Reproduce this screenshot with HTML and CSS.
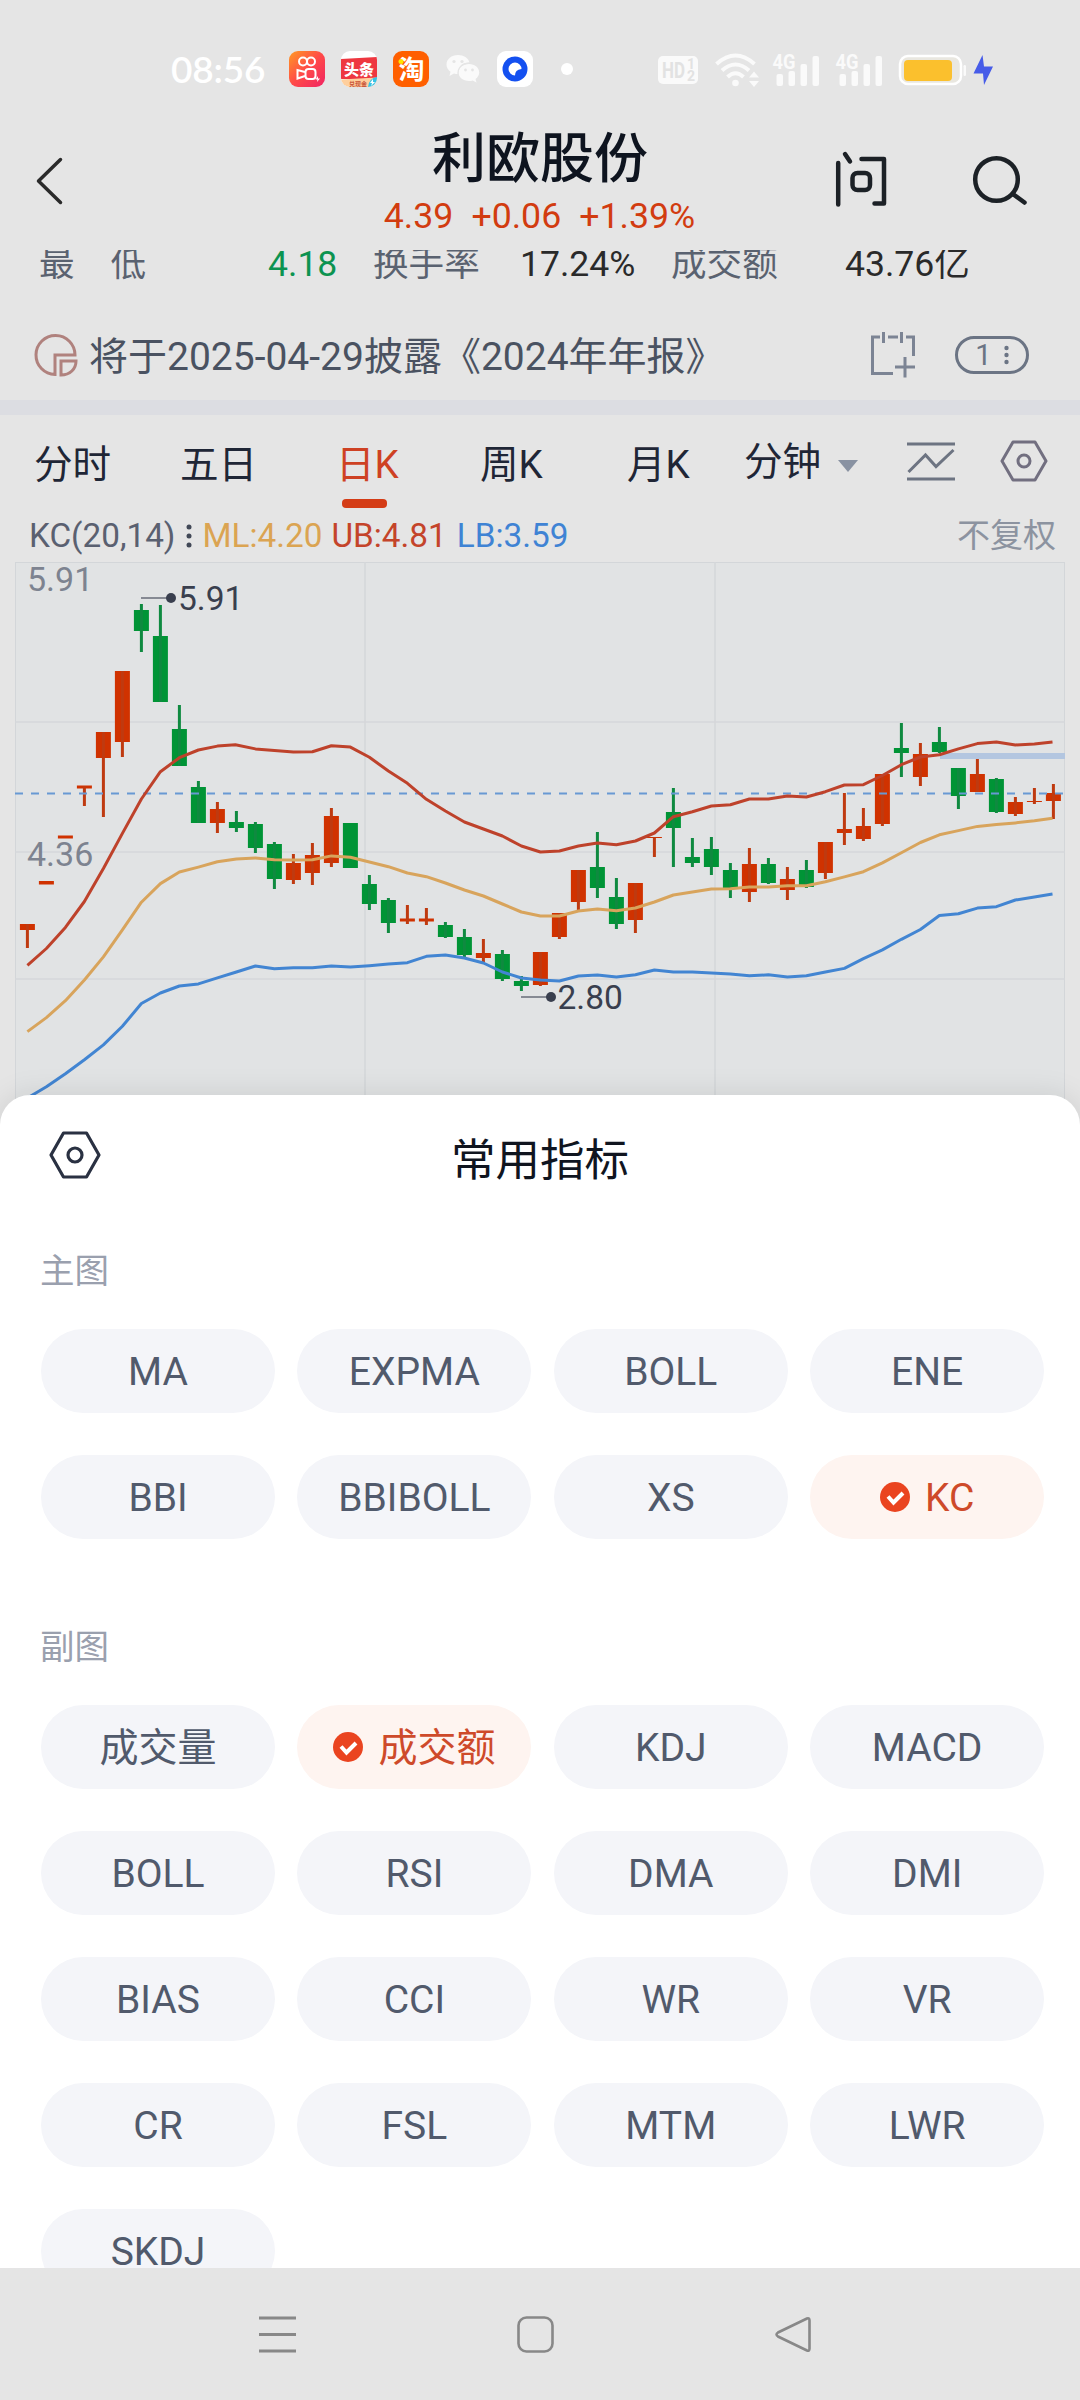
FILE: index.html
```html
<!DOCTYPE html>
<html lang="zh-CN">
<head>
<meta charset="utf-8">
<title>利欧股份</title>
<link rel="stylesheet" href="styles.css">
</head>
<body>
<svg class="defs" width="0" height="0">
  <symbol id="check" viewBox="0 0 30 30"><circle cx="15" cy="15" r="15" fill="#ea4420"/><path d="M8 14.500l5.500 6L23 11" fill="none" stroke="#fff" stroke-width="4"/></symbol>
  <symbol id="bars" viewBox="0 0 46 34">
    <g fill="#fafafa"><rect x="3.500" y="21" width="6.500" height="12" rx="2"/><rect x="15.500" y="18" width="6.500" height="15" rx="2"/><rect x="27.500" y="11" width="6.500" height="22" rx="2"/><rect x="39.500" y="3" width="6.500" height="30" rx="2"/></g>
  </symbol>
</svg>

<header class="status">
  <span class="clock">08:56</span>
  <div class="apps">
    <svg width="36" height="36" viewBox="0 0 36 36">
      <defs><linearGradient id="ks" x1="0" y1="0" x2="1" y2="1"><stop offset="0" stop-color="#ff9a24"/><stop offset=".5" stop-color="#ff4a48"/><stop offset="1" stop-color="#f02464"/></linearGradient></defs>
      <rect width="36" height="36" rx="9" fill="url(#ks)"/>
      <g fill="none" stroke="#fff" stroke-width="2"><circle cx="14" cy="10.500" r="4"/><circle cx="22" cy="10.500" r="4"/><rect x="16.500" y="18" width="10" height="10" rx="3"/><path d="M16 21l-7.500-2v8.500L16 25"/></g>
      <path d="M29 25l-2.500 3.500h2L28 31l3-3.500h-2z" fill="#fff"/>
    </svg>
    <svg width="36" height="36" viewBox="0 0 36 36">
      <defs><clipPath id="rr"><rect width="36" height="36" rx="9"/></clipPath></defs>
      <g clip-path="url(#rr)"><rect width="36" height="36" fill="#fff"/><path d="M0 8l36-2v22H0z" fill="#ee3740"/><path d="M0 28.500l36-2v10H0z" fill="#ffcf9d"/><path d="M27 36q1-9 9-10v10z" fill="#35c3e8"/><path d="M32 28l-3 4h2l-1 3 4-4h-2z" fill="#fff"/></g>
      <text x="18" y="23.500" text-anchor="middle" class="tt">头条</text>
      <text x="17" y="34.500" text-anchor="middle" class="tt-sub">兑现金</text>
    </svg>
    <svg width="36" height="36" viewBox="0 0 36 36"><rect width="36" height="36" rx="9" fill="#ff5f00"/><text x="18.500" y="28" text-anchor="middle" class="tb">淘</text><circle cx="8" cy="10.500" r="2.500" fill="#ffe600"/></svg>
    <svg width="36" height="36" viewBox="0 0 36 36"><g fill="#fafafa"><path d="M13 4C6.500 4 1.500 8.200 1.500 13.500c0 3 1.500 5.500 4 7.200L4.500 25l4.500-2.500c1.300.4 2.600.5 4 .5-.5-7 5-11.500 11.500-11.500C23.500 7 18.500 4 13 4z"/><path d="M24 13c-6 0-10.500 3.700-10.500 8.500S18 30 24 30c1.300 0 2.500-.2 3.700-.6L31.500 31.500l-1-3.500c2.300-1.600 3.700-3.900 3.700-6.500C34.200 16.700 30 13 24 13z"/></g><path d="M13.200 24C12 17 17 11.800 25 12.200" fill="none" stroke="#e5e5e5" stroke-width="1.200"/><g fill="#e5e5e5"><circle cx="9" cy="10.500" r="1.600"/><circle cx="17" cy="10.500" r="1.600"/><circle cx="20.500" cy="19" r="1.400"/><circle cx="27.500" cy="19" r="1.400"/></g></svg>
    <svg width="36" height="36" viewBox="0 0 36 36"><rect width="36" height="36" rx="9" fill="#fff"/><circle cx="18" cy="18" r="12.500" fill="#1450f0"/><path d="M24.500 18A6.500 6.500 0 1 0 18 24.500q0-3 1.500-4.500t5-2z" fill="#fff"/></svg>
    <i class="more-dot"></i>
  </div>
  <div class="sys">
    <svg width="40" height="34" viewBox="0 0 40 34"><rect y="3" width="40" height="28" rx="5" fill="#fafafa"/><text x="4" y="25" class="hd" textLength="23" lengthAdjust="spacingAndGlyphs">HD</text><text x="29" y="16" class="hd-s">1</text><text x="29" y="27.500" class="hd-s">2</text></svg>
    <svg width="46" height="34" viewBox="0 0 46 34"><g fill="none" stroke="#fafafa" stroke-width="4"><path d="M1.500 11q19-17 38 0M7 17.500q13.500-12 27 0M12.500 24q8-7.500 16 0"/></g><circle cx="20.500" cy="30" r="3.300" fill="#fafafa"/><path d="M34 24.500l5-6 5 6zM34 28h10l-5 6z" fill="#fafafa"/></svg>
    <svg class="sig" width="46" height="34"><use href="#bars" width="46" height="34"/><text x="-.5" y="15.500" class="net" textLength="23" lengthAdjust="spacingAndGlyphs">4G</text></svg>
    <svg width="46" height="34"><use href="#bars" width="46" height="34"/><text x="-.5" y="15.500" class="net" textLength="23" lengthAdjust="spacingAndGlyphs">4G</text></svg>
    <svg width="94" height="34" viewBox="0 0 94 34"><rect x="1" y="3" width="61" height="28" rx="8" fill="#e9e7e0" stroke="#fff" stroke-width="2.500"/><rect x="5" y="7" width="48" height="21" rx="4" fill="#fbc02d"/><rect x="64.500" y="12" width="2.500" height="11" rx="1.200" fill="#fafafa"/><path d="M83.500 2L74.500 20.500h9.500L85 32l9-18.500h-9z" fill="#475ce8"/></svg>
  </div>
</header>

<div class="titlebar">
  <svg class="back" width="30" height="50" viewBox="0 0 30 50"><path d="M25.500 3.500L3.500 25l22 21.500" fill="none" stroke="#2a2a2a" stroke-width="3.500" stroke-linecap="round" stroke-linejoin="round"/></svg>
  <div class="stock">
    <h1>利欧股份</h1>
    <p><span>4.39</span><span>+0.06</span><span>+1.39%</span></p>
  </div>
  <div class="tools">
    <svg width="54" height="58" viewBox="0 0 54 58"><g fill="none" stroke="#1c2126" stroke-width="4.500" stroke-linecap="round" stroke-linejoin="round"><path d="M3.200 14v41.500M10 5l5 7.500M26.500 10h22.500v44.500H39.500"/><rect x="17.500" y="24" width="17.500" height="17" rx="5"/></g></svg>
    <svg width="56" height="58" viewBox="0 0 56 58"><g fill="none" stroke="#1c2126" stroke-width="4.500" stroke-linecap="round"><circle cx="24.500" cy="30.500" r="21.300"/><path d="M41.500 45.500l11 8"/></g></svg>
  </div>
</div>

<div class="stats">
  <span class="k wide">最低</span><span class="v down">4.18</span>
  <span class="k k2">换手率</span><span class="v v2">17.24%</span>
  <span class="k k3">成交额</span><span class="v v3">43.76亿</span>
</div>

<div class="notice">
  <svg width="44" height="44" viewBox="0 0 44 44"><g fill="none" stroke="#b0827e" stroke-width="3"><path d="M21 41.500A19.500 19.500 0 1 1 41 22H21z"/><path d="M27 28h15c0 8-6 14-15 14z"/></g></svg>
  <span class="notice-text">将于2025-04-29披露《2024年年报》</span>
  <svg class="cal" width="44" height="46" viewBox="0 0 44 46"><g fill="none" stroke="#7c8494" stroke-width="3"><path d="M9 5H1.500v36.500H22M17 5h10M35 5h7.500v19M12.500 0v11M30.500 0v11M24 35h20M34 25v20.500"/></g></svg>
  <span class="count">1<svg width="5" height="20" viewBox="0 0 5 20" fill="#6b7484"><circle cx="2.500" cy="3" r="2.200"/><circle cx="2.500" cy="10" r="2.200"/><circle cx="2.500" cy="17" r="2.200"/></svg></span>
</div>

<nav class="tabs">
  <span>分时</span><span>五日</span><span class="on">日K</span><span>周K</span><span>月K</span>
  <span class="minute">分钟<i></i></span>
  <svg width="48" height="40" viewBox="0 0 48 40"><path d="M0 2h48M0 37h48M1.500 30L18.500 13 29 24.500 46.500 8" fill="none" stroke="#6d7482" stroke-width="3"/></svg>
  <svg class="hex" width="48" height="42" viewBox="0 0 48 42"><g fill="none" stroke="#726f80" stroke-width="3" stroke-linejoin="round"><path d="M13 2h22l11 19-11 19H13L2 21z"/><circle cx="24" cy="21" r="6"/></g></svg>
</nav>

<div class="legend">
  <span>KC(20,14)</span>
  <svg width="6" height="24" viewBox="0 0 6 24" fill="#414856"><circle cx="3" cy="3" r="2.500"/><circle cx="3" cy="12" r="2.500"/><circle cx="3" cy="21" r="2.500"/></svg>
  <span class="ml">ML:4.20</span><span class="ub">UB:4.81</span><span class="lb">LB:3.59</span>
  <span class="adj">不复权</span>
</div>

<svg class="chart" width="1080" height="563" viewBox="0 562 1080 563">
  <rect x="15.500" y="562.500" width="1049" height="600" fill="#e1e3e4" stroke="#d3d6d9"/>
  <path d="M15 722H1065M15 852H1065M15 979H1065M365 562V1125M715 562V1125" stroke="#d5d7da" stroke-width="1.600" fill="none"/>
  <path d="M940 756H1065" stroke="#b3c6e0" stroke-width="6"/>
  <g class="axis"><text x="27" y="591">5.91</text><text x="27" y="865.500">4.36</text></g>
  <path class="body up" d="M27.400 924V930M46.400 881V884.500M65.400 835.500V838.500M84.400 785.500V788.500M103.400 732V758M122.400 671V742M217.400 809V823M293.400 863V880M312.400 855V873M331.400 816V863M407.400 918.500V921.500M426.400 918.500V921.500M483.400 953V958M540.400 952V985M559.400 913V937M578.400 870V902M635.400 883V920M654.400 837V838M749.400 864V892M787.400 879V890M825.400 842V873M844.400 829V833M863.400 826V839M882.400 774V824M920.400 754V777M977.400 774V792M1015.400 802V814M1034.400 801V802M1053.400 793V801"/>
  <path class="wick up" d="M27.400 924V948M84.400 786V806M103.400 732V817M122.400 671V757M217.400 802V833M293.400 854V884M312.400 843V885M331.400 808V867M407.400 905V924M426.400 908V925M483.400 939V962M540.400 952V986M559.400 913V939M578.400 870V910M635.400 883V933M654.400 837V857M749.400 848V902M787.400 867V900M825.400 842V879M844.400 793V845M863.400 808V841M882.400 774V826M920.400 743V786M977.400 759V792M1015.400 797V816M1034.400 788V804M1053.400 784V819"/>
  <path class="body down" d="M141.400 610V631M160.400 636V702M179.400 729V766M198.400 787V823M236.400 822V828M255.400 824V848M274.400 844V879M350.400 823V868M369.400 884V904M388.400 900V923M445.400 925V937M464.400 937V955M502.400 954V979M521.400 981V986M597.400 867V888M616.400 897V924M673.400 812V828M692.400 857V863M711.400 849V867M730.400 870V888M768.400 864V883M806.400 870V887M901.400 748V753M939.400 742V752M958.400 768V796M996.400 779V812"/>
  <path class="wick down" d="M141.400 604V652M160.400 605V702M179.400 705V766M198.400 781V823M236.400 811V832M255.400 822V853M274.400 842V889M369.400 875V910M388.400 898V933M445.400 922V938M464.400 929V957M502.400 950V981M521.400 976V991M597.400 832V898M616.400 878V929M673.400 788V867M692.400 838V867M711.400 837V875M730.400 863V898M768.400 858V884M806.400 860V888M901.400 723V777M939.400 727V753M958.400 768V809M996.400 778V813"/>
  <path d="M15 793.500H1065" stroke="#6899d3" stroke-width="2" stroke-dasharray="8 8"/>
  <polyline class="line" stroke="#be422b" points="27.4,965.3 46.4,948.5 65.4,927.4 84.4,901.5 103.4,868.5 122.4,833.4 141.4,799 160.4,771.7 179.4,757.7 198.4,750 217.4,746.1 235.4,744.7 255.4,748.9 274.4,750.6 293.4,752 312.4,751.7 331.4,745.7 350.4,747.1 369.4,757.3 388.4,771 407.4,783.3 426.4,799.3 445.4,811 464.4,822 483.4,829 502.4,836 521.4,846 540.4,852 559.4,851 578.4,846 597.4,843 616.4,844.7 635.4,841 654.4,833 673.4,816.7 692.4,811.7 711.4,806 730.4,804.7 749.4,799 768.4,799 787.4,795.9 806.4,797 825.4,791.7 844.4,785 863.4,784.7 882.4,775.5 901.4,764.7 920.4,757 939.4,754.8 958.4,748.9 977.4,743.6 996.4,741.9 1015.4,745 1034.4,744 1052.5,741.9"/>
  <polyline class="line" stroke="#d8a45c" points="27.4,1031.6 46.4,1017.6 65.4,1000.7 84.4,980 103.4,956.9 122.4,929.9 141.4,902.2 160.4,883.6 179.4,872 198.4,867.1 217.4,861.8 236.4,859 255.4,858 274.4,859.7 293.4,860.1 312.4,859.7 331.4,855.9 350.4,857.3 369.4,862 388.4,866.7 407.4,873 426.4,876.7 445.4,883 464.4,890 483.4,896 502.4,904 521.4,912 540.4,916 559.4,916 578.4,911 597.4,909 616.4,910.7 635.4,908 654.4,902 673.4,895 692.4,892 711.4,889 730.4,888.8 749.4,887.1 768.4,887.1 787.4,885.7 806.4,885.7 825.4,881.8 844.4,876.9 863.4,871.7 882.4,862.9 901.4,852.7 920.4,842.5 939.4,834.8 958.4,830.6 977.4,826.4 996.4,824.6 1015.4,822.9 1034.4,820.8 1052.5,818.3"/>
  <polyline class="line" stroke="#4285d2" points="27.4,1098 46.4,1086.7 65.4,1073.7 84.4,1059.7 103.4,1044.9 122.4,1026.3 141.4,1003.5 160.4,993 179.4,986 198.4,983.9 217.4,977.9 236.4,972 255.4,966 274.4,968.8 293.4,967.8 312.4,967.8 331.4,966 350.4,967 369.4,965.7 388.4,964 407.4,962.7 426.4,956.3 445.4,955 464.4,958 483.4,963 502.4,972 521.4,978 540.4,980 559.4,981 578.4,976 597.4,975 616.4,977 635.4,974.7 654.4,970 673.4,972 692.4,972 711.4,973 730.4,974 749.4,975.8 768.4,974.8 787.4,976.9 806.4,975.8 825.4,972 844.4,968.4 863.4,958.6 882.4,949.9 901.4,939.3 920.4,929.5 939.4,915.5 958.4,913.7 977.4,908.1 996.4,906.7 1015.4,900 1034.4,896.9 1052.5,894.1"/>
  <g class="mark"><path d="M141 598H171M521 997H551"/><circle cx="171" cy="598" r="5"/><circle cx="551" cy="997" r="5"/><text x="178" y="610">5.91</text><text x="557.500" y="1009">2.80</text></g>
</svg>

<section class="sheet">
  <div class="sheet-head">
    <svg width="52" height="48" viewBox="0 0 52 48"><g fill="none" stroke="#2a3142" stroke-width="3.200" stroke-linejoin="round"><path d="M14.500 2h23L50 24 37.500 46h-23L2 24z"/><circle cx="26" cy="24" r="7"/></g></svg>
    <h2>常用指标</h2>
  </div>
  <h3>主图</h3>
  <div class="grid">
    <button>MA</button><button>EXPMA</button><button>BOLL</button><button>ENE</button>
    <button>BBI</button><button>BBIBOLL</button><button>XS</button><button class="sel"><svg width="30" height="30"><use href="#check"/></svg>KC</button>
  </div>
  <h3 class="second">副图</h3>
  <div class="grid">
    <button>成交量</button><button class="sel"><svg width="30" height="30"><use href="#check"/></svg>成交额</button><button>KDJ</button><button>MACD</button>
    <button>BOLL</button><button>RSI</button><button>DMA</button><button>DMI</button>
    <button>BIAS</button><button>CCI</button><button>WR</button><button>VR</button>
    <button>CR</button><button>FSL</button><button>MTM</button><button>LWR</button>
    <button>SKDJ</button>
  </div>
</section>

<footer class="navbar">
  <svg width="37" height="37" viewBox="0 0 37 37"><path d="M0 2h37M0 18.500h37M0 35h37" stroke="#888" stroke-width="3"/></svg>
  <svg width="37" height="37" viewBox="0 0 37 37"><rect x="1.500" y="1.500" width="34" height="34" rx="8" fill="none" stroke="#888" stroke-width="2.600"/></svg>
  <svg width="37" height="37" viewBox="0 0 37 37"><path d="M32 2.500L3 16.500q-3 2 0 4L32 34.500q2.500 1 2.500-2v-28q0-3-2.500-2z" fill="none" stroke="#888" stroke-width="2.600"/></svg>
</footer>
</body>
</html>
```
FILE: styles.css
```css
* { box-sizing: border-box; margin: 0; padding: 0; }
body {
  width: 1080px; height: 2400px; overflow: hidden;
  display: flex; flex-direction: column;
  background: #e5e5e5; color: #1f2636;
  font-family: Roboto, "Noto Sans CJK SC", sans-serif;
}
body > * { flex-shrink: 0; }
svg { display: block; flex-shrink: 0; overflow: visible; }
.defs { position: absolute; }

.status { height: 120px; padding: 0 87px 0 171px; display: flex; align-items: flex-start; }
.clock { width: 118px; height: 36px; margin-top: 51px; font: 600 37px/36px Lato, sans-serif; letter-spacing: -.2px; color: #fff; }
.apps { display: flex; align-items: center; gap: 16px; margin-top: 51px; }
.more-dot { width: 12px; height: 12px; border-radius: 50%; background: #fff; margin-left: 12px; }
.sys { display: flex; gap: 17px; margin: 53px 0 0 auto; }
.sys .sig { margin-left: -5px; }
.net { font: 700 20px Roboto, sans-serif; fill: #fafafa; }
.hd { font: 700 22px Roboto, sans-serif; fill: #e2e2e2; }
.hd-s { font: 700 14px Roboto, sans-serif; fill: #e2e2e2; }
.tt { font: 900 15px "Noto Sans CJK SC", sans-serif; fill: #fff; }
.tt-sub { font: 700 6px "Noto Sans CJK SC", sans-serif; fill: #c8533a; }
.tb { font: 700 26px "Noto Sans CJK SC", sans-serif; fill: #fff; }

.titlebar { height: 130px; display: grid; grid-template-columns: 300px 1fr 300px; }
.back { margin: 36px 0 0 35px; }
.stock { text-align: center; }
.stock h1 { font-size: 54px; font-weight: 500; line-height: 60px; margin-top: 10px; color: #0e141f; }
.stock p { display: flex; justify-content: center; gap: 18px; margin: 5px 1px 0 0; font-size: 35.7px; line-height: 42px; color: #d23c10; }
.tools { display: flex; gap: 83px; padding: 29px 0 0 55px; }

.stats { height: 70px; overflow: hidden; display: flex; padding-left: 39px; font-size: 35.6px; line-height: 54px; color: #2a2a2a; white-space: nowrap; }
.stats > span { margin-top: -13px; height: 54px; }
.stats .k { color: #5a6270; }
.stats .wide { letter-spacing: 36px; width: 229px; }
.stats .v { color: #2a2a2a; }
.stats .down { color: #0c9350; width: 105px; }
.stats .k2 { width: 147px; }
.stats .v2 { width: 151px; }
.stats .k3 { width: 174px; }

.notice { height: 80px; display: flex; align-items: flex-start; padding: 13px 51px 0 34px; font-size: 39px; color: #4a5261; }
.notice-text { line-height: 46px; margin: 1px 0 0 11px; white-space: nowrap; width: 782px; }
.cal { margin-top: -1px; }
.count { display: flex; align-items: center; justify-content: center; gap: 12px; width: 74px; height: 38px; margin: 3px 0 0 40px; border: 3px solid #6b7484; border-radius: 19px; font-size: 29px; color: #6b7484; }

.tabs { height: 94px; border-top: 15px solid #dcdde2; display: flex; align-items: flex-start; padding: 0 0 0 34px; font-size: 38.6px; color: #1f2636; white-space: nowrap; }
.tabs > span { height: 94px; line-height: 100px; width: 146px; }
.tabs .on { color: #ce4123; position: relative; }
.tabs > span:nth-child(2) { width: 156px; }
.tabs > span:nth-child(3) { width: 144px; }
.tabs > span:nth-child(4) { width: 147px; }
.tabs > .on::after { content: ""; position: absolute; left: 6px; top: 84px; width: 45px; height: 9px; border-radius: 4px; background: #d43c16; }
.tabs > span:nth-child(5) { width: 117px; }
.tabs .minute { width: 163px; display: flex; align-items: center; gap: 17px; }
.minute i { border: 10px solid transparent; border-top: 12px solid #8992a2; border-bottom: 0; margin-top: 8px; }
.tabs > svg { margin-top: 27px; }
.tabs .hex { margin: 25px 0 0 45px; }

.legend { height: 53px; margin-top: 15px; padding: 0 24px 0 29px; display: flex; align-items: center; font-size: 33.3px; line-height: 53px; color: #5a6070; white-space: nowrap; }
.legend svg { margin: 0 10px 0 11px; }
.legend .ml { color: #dba452; margin-right: 9px; }
.legend .ub { color: #c4442a; margin-right: 10px; }
.legend .lb { color: #3f83d4; }
.legend .adj { margin-left: auto; font-size: 33px; color: #8c93a0; }

.chart .axis { font-size: 34px; fill: #7d8390; }
.chart .body { stroke-width: 15; }
.chart .wick { stroke-width: 3; }
.chart .up { stroke: #d03200; }
.chart .wick.up { stroke: #bf3a10; }
.chart .down { stroke: #009436; }
.chart .wick.down { stroke: #0f8a40; }
.chart .line { fill: none; stroke-width: 3; stroke-linejoin: round; }
.chart .mark { font-size: 33.5px; fill: #393f4e; }
.chart .mark path { stroke: #868a93; stroke-width: 2; }

.sheet { position: relative; height: 1173px; margin-top: -30px; border-radius: 30px 30px 0 0; background: #fff; box-shadow: 0 0 30px rgba(0,0,0,.1); overflow: hidden; }
.sheet-head { height: 138px; display: grid; grid-template-columns: 300px 1fr 300px; padding-top: 36px; }
.sheet-head svg { margin-left: 49px; }
.sheet-head h2 { font-size: 44.5px; font-weight: 400; line-height: 60px; text-align: center; color: #10151f; }
.sheet h3 { height: 96px; padding: 13px 0 0 40px; font-size: 34.5px; font-weight: 400; line-height: 50px; color: #9aa0ae; }
.sheet h3.second { height: 166px; padding-top: 83px; }
.grid { display: grid; grid-template-columns: repeat(4, 234px); gap: 42px 22.4px; padding-left: 41px; }
.grid button { height: 84px; padding-top: 2px; border: 0; border-radius: 42px; background: #f4f5f9; display: flex; align-items: center; justify-content: center; gap: 15px; font: 39px/82px Roboto, "Noto Sans CJK SC", sans-serif; color: #515a6c; }
.grid .sel { background: #fef4f0; color: #ce4a2a; }
.grid .sel svg { margin-top: -2px; }

.navbar { height: 132px; background: #e5e5e5; position: relative; display: flex; gap: 221px; padding: 48px 0 0 259px; }
```
